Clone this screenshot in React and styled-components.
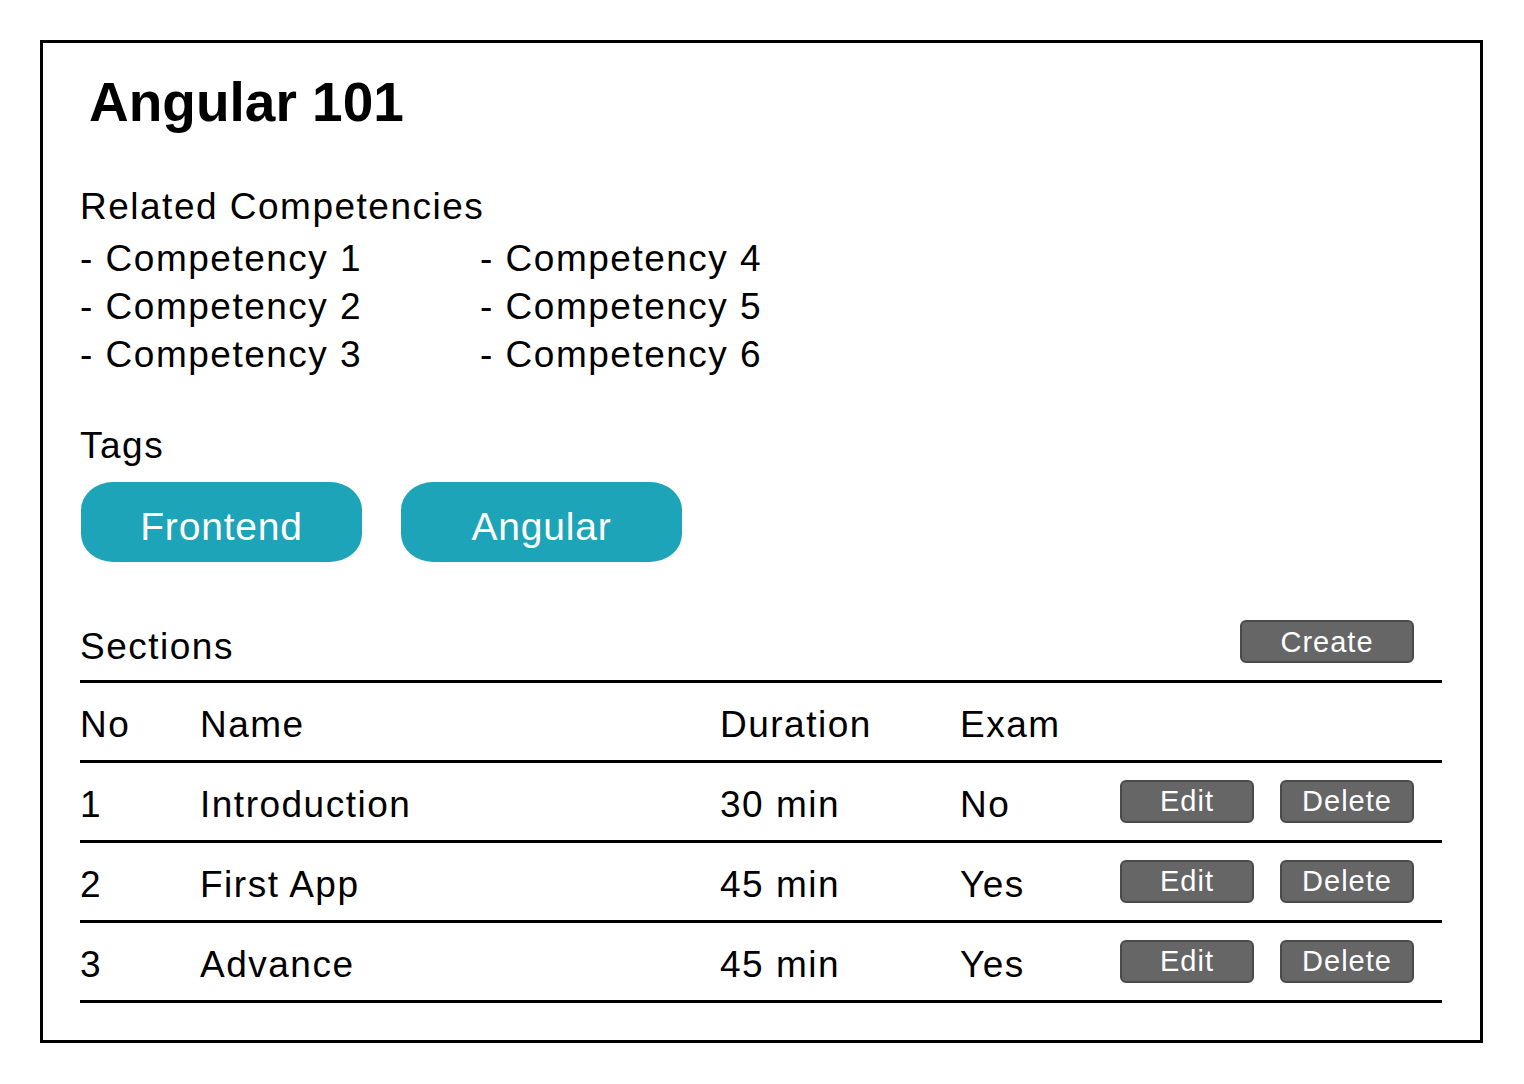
import styled, { createGlobalStyle } from "styled-components";

const GlobalStyle = createGlobalStyle`
  * {
    box-sizing: border-box;
  }
  body {
    margin: 0;
    background: #ffffff;
    color: #000000;
    font-family: "Liberation Sans", Arial, Helvetica, sans-serif;
  }
`;

export const Card = styled.section`
  width: 1443px;
  margin: 40px 0 0 40px;
  border: 3px solid #000;
  padding: 27px 38px 37px 37px;
  font-size: 37px;
  letter-spacing: 1.5px;
`;

export const Title = styled.h1`
  margin: 0 0 49px 9px;
  font-size: 55px;
  line-height: 64px;
  font-weight: 700;
  letter-spacing: 0;
`;

export const Label = styled.div`
  line-height: 48px;
  padding-top: ${(p) => p.$drop || 0}px;
  margin-bottom: ${(p) => p.$gap || 0}px;
`;

export const CompetencyGrid = styled.ul`
  list-style: none;
  margin: 0 0 43px;
  padding: 0;
  display: grid;
  grid-template-columns: 400px auto;
  grid-template-rows: repeat(3, 48px);
  grid-auto-flow: column;
  line-height: 48px;
`;

export const TagRow = styled.div`
  display: flex;
  gap: 39px;
  padding-left: 1px;
  margin-bottom: 58px;
`;

export const Tag = styled.span`
  width: 281px;
  height: 80px;
  padding-top: 9px;
  border-radius: 32px / 28px;
  background: #1ea4b8;
  color: #ffffff;
  text-align: center;
  font-size: 39px;
  line-height: 71px;
  letter-spacing: 0.8px;
`;

export const SectionsHeader = styled.div`
  display: flex;
  justify-content: space-between;
  align-items: flex-start;
  height: 60px;
`;

export const ActionButton = styled.button`
  width: ${(p) => p.$width || 134}px;
  height: 43px;
  margin-right: ${(p) => p.$right || 0}px;
  padding: 0;
  border: 2px solid #4a4a4a;
  border-radius: 6px;
  background: #666666;
  color: #ffffff;
  font-family: inherit;
  font-size: 29px;
  line-height: ${(p) => p.$line || 38}px;
  letter-spacing: 1px;
  cursor: pointer;
`;

export const Table = styled.div`
  border-top: 3px solid #000;
`;

export const Row = styled.div`
  display: grid;
  grid-template-columns: 120px 520px 240px 1fr 322px;
  height: 80px;
  border-bottom: 3px solid #000;
`;

export const Cell = styled.div`
  padding-top: 7px;
  line-height: 70px;
  white-space: nowrap;
`;

export const Actions = styled.div`
  display: flex;
  align-self: center;
  gap: 26px;
  padding-right: 28px;
`;

const competencies = [1, 2, 3, 4, 5, 6].map((n) => `- Competency ${n}`);
const tags = ["Frontend", "Angular"];
const sections = [
  { no: 1, name: "Introduction", duration: "30 min", exam: "No" },
  { no: 2, name: "First App", duration: "45 min", exam: "Yes" },
  { no: 3, name: "Advance", duration: "45 min", exam: "Yes" },
];

function App() {
  return (
    <>
      <GlobalStyle />
      <Card>
        <Title>Angular 101</Title>

        <Label $gap={4}>Related Competencies</Label>
        <CompetencyGrid>
          {competencies.map((c) => (
            <li key={c}>{c}</li>
          ))}
        </CompetencyGrid>

        <Label $gap={12}>Tags</Label>
        <TagRow>
          {tags.map((t) => (
            <Tag key={t}>{t}</Tag>
          ))}
        </TagRow>

        <SectionsHeader>
          <Label $drop={3}>Sections</Label>
          <ActionButton $width={174} $right={28} $line={38}>
            Create
          </ActionButton>
        </SectionsHeader>

        <Table>
          <Row>
            <Cell>No</Cell>
            <Cell>Name</Cell>
            <Cell>Duration</Cell>
            <Cell>Exam</Cell>
          </Row>
          {sections.map((s) => (
            <Row key={s.no}>
              <Cell>{s.no}</Cell>
              <Cell>{s.name}</Cell>
              <Cell>{s.duration}</Cell>
              <Cell>{s.exam}</Cell>
              <Actions>
                <ActionButton $line={39}>Edit</ActionButton>
                <ActionButton $line={39}>Delete</ActionButton>
              </Actions>
            </Row>
          ))}
        </Table>
      </Card>
    </>
  );
}

export default App;
